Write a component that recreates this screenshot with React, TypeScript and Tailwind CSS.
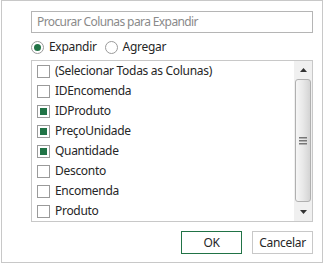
import React from "react";

const cols = [
  { label: "(Selecionar Todas as Colunas)", on: false },
  { label: "IDEncomenda", on: false },
  { label: "IDProduto", on: true },
  { label: "PreçoUnidade", on: true },
  { label: "Quantidade", on: true },
  { label: "Desconto", on: false },
  { label: "Encomenda", on: false },
  { label: "Produto", on: false },
];

function Check({ on }: { on: boolean }) {
  return (
    <span className="flex h-[13px] w-[13px] shrink-0 items-center justify-center border border-[#9a9a9a] bg-white">
      {on && <span className="h-[7px] w-[7px] bg-[#217346]" />}
    </span>
  );
}

function Radio({ on }: { on: boolean }) {
  return (
    <span className="flex h-[13px] w-[13px] shrink-0 items-center justify-center rounded-full border border-[#9a9a9a] bg-white">
      {on && <span className="h-[7px] w-[7px] rounded-full bg-[#217346]" />}
    </span>
  );
}

export default function App() {
  return (
    <div className="h-[264px] w-[324px] bg-white font-['Noto_Sans',sans-serif] text-[12px] tracking-[-0.3px] text-[#262626]">
      <div className="ml-px h-[263px] w-[322px] border border-[#c8c8c8] pl-[29px] pr-[9px] pt-[10px]">
        <div className="flex h-[22px] items-center border border-[#b5b5b5] px-[5px] tracking-[-0.6px] text-[#8a8a8a]">
          Procurar Colunas para Expandir
        </div>
        <div className="mt-[5px] flex h-[18px] items-center">
          <Radio on />
          <span className="ml-[5px]">Expandir</span>
          <span className="ml-[8px]">
            <Radio on={false} />
          </span>
          <span className="ml-[5px]">Agregar</span>
        </div>
        <div className="mt-[4px] flex h-[162px] border border-[#c8c8c8]">
          <div className="flex flex-1 flex-col">
            {cols.map((c) => (
              <div key={c.label} className="flex h-[20px] items-center gap-[5px] pl-[5px]">
                <Check on={c.on} />
                <span className="leading-none">{c.label}</span>
              </div>
            ))}
          </div>
          <div className="flex w-[18px] flex-col bg-[#f0f0f0]">
            <div className="flex h-[18px] items-center justify-center">
              <svg width="7" height="4" viewBox="0 0 7 4">
                <path d="M3.5 0 L7 4 L0 4 Z" fill="#333" />
              </svg>
            </div>
            <div className="mx-px flex flex-1 items-center justify-center rounded-[3px] border border-[#b0b0b0] bg-gradient-to-r from-[#f6f6f6] via-[#e8e8e8] to-[#d4d4d4]">
              <svg width="8" height="8" viewBox="0 0 8 8">
                <rect x="0" y="0" width="8" height="1.5" fill="#777" />
                <rect x="0" y="3" width="8" height="1.5" fill="#777" />
                <rect x="0" y="6" width="8" height="1.5" fill="#777" />
              </svg>
            </div>
            <div className="flex h-[19px] items-center justify-center">
              <svg width="7" height="4" viewBox="0 0 7 4">
                <path d="M0 0 L7 0 L3.5 4 Z" fill="#333" />
              </svg>
            </div>
          </div>
        </div>
        <div className="mt-[9px] flex justify-end gap-[10px]">
          <button className="h-[23px] w-[61px] border border-[#217346] bg-white text-[12px] text-[#262626]">
            OK
          </button>
          <button className="h-[23px] w-[61px] border border-[#c8c8c8] bg-white text-[12px] text-[#262626]">
            Cancelar
          </button>
        </div>
      </div>
    </div>
  );
}
